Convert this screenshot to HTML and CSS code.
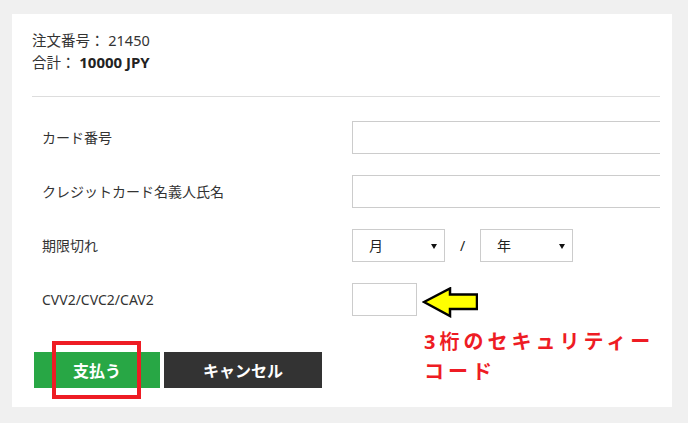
FILE: index.html
```html
<!DOCTYPE html>
<html lang="ja">
<head>
    <meta charset="UTF-8">
    <meta name="viewport" content="width=device-width, initial-scale=1.0">
    <title>カード決済</title>
    <link rel="stylesheet" href="styles.css">
</head>
<body>
    <div class="panel">
        <div class="summary">
            <div>注文番号： 21450</div>
            <div>合計： <strong>10000 JPY</strong></div>
        </div>
        <div class="divider"></div>

        <form class="card-form">
            <div class="row">
                <label for="cardNumber">カード番号</label>
                <div class="field clip">
                    <input type="text" id="cardNumber" class="text-input">
                </div>
            </div>
            <div class="row">
                <label for="cardName">クレジットカード名義人氏名</label>
                <div class="field clip">
                    <input type="text" id="cardName" class="text-input">
                </div>
            </div>
            <div class="row">
                <label for="expMonth">期限切れ</label>
                <div class="field">
                    <div class="select-wrap">
                        <select id="expMonth"><option>月</option></select>
                    </div>
                    <span class="slash">/</span>
                    <div class="select-wrap">
                        <select id="expYear"><option>年</option></select>
                    </div>
                </div>
            </div>
            <div class="row">
                <label for="cvv">CVV2/CVC2/CAV2</label>
                <div class="field cvv-field">
                    <input type="text" id="cvv" class="cvv-input">
                    <svg class="hint-arrow" width="56" height="31" viewBox="0 0 56 31">
                        <polygon points="2,15 28,1.5 28,7.5 55,7.5 55,22 28,22 28,29" fill="#ffff00" stroke="#000" stroke-width="2.5" stroke-linejoin="miter"/>
                    </svg>
                    <div class="hint-text">3桁のセキュリティー<br>コード</div>
                </div>
            </div>

            <div class="actions">
                <button type="button" class="btn btn-pay">支払う</button>
                <button type="button" class="btn btn-cancel">キャンセル</button>
                <span class="highlight"></span>
            </div>
        </form>
    </div>
</body>
</html>
```

FILE: styles.css
```css
body {
    margin: 0;
    background-color: #f0f0f0;
    font-family: "Noto Sans", "Noto Sans CJK JP", sans-serif;
    color: #333;
    font-size: 14px;
}
.panel {
    margin: 14px 0 0 12px;
    width: 660px;
    height: 393px;
    box-sizing: border-box;
    padding: 15px 12px 0 20px;
    background-color: #fff;
}
.summary {
    font-size: 14.5px;
    line-height: 22px;
}
.summary strong {
    font-size: 15px;
    font-weight: 700;
    color: #222;
}
.divider {
    margin-top: 23px;
    border-top: 1px solid #ddd;
}
.card-form {
    padding: 24px 0 0 10px;
    display: flex;
    flex-direction: column;
    gap: 21px;
}
.row {
    display: flex;
    align-items: center;
    height: 33px;
}
.row label {
    width: 310px;
    flex-shrink: 0;
    line-height: 20px;
}
.field {
    flex: 1;
    min-width: 0;
    height: 33px;
    display: flex;
    align-items: center;
}
.clip {
    overflow: hidden;
}
.text-input {
    width: 330px;
    height: 33px;
    box-sizing: border-box;
    border: 1px solid #ccc;
    flex-shrink: 0;
    outline: none;
}
.select-wrap {
    position: relative;
    width: 93px;
    height: 33px;
}
.select-wrap::after {
    content: "";
    position: absolute;
    right: 8px;
    top: 15px;
    border-left: 3px solid transparent;
    border-right: 3px solid transparent;
    border-top: 5px solid #111;
    pointer-events: none;
}
.select-wrap select {
    appearance: none;
    -webkit-appearance: none;
    width: 100%;
    height: 100%;
    border: 1px solid #ccc;
    border-radius: 0;
    background: #fff;
    padding: 0 0 0 16px;
    font-family: inherit;
    font-size: 14px;
    color: #222;
    outline: none;
}
.slash {
    width: 35px;
    text-align: center;
    color: #222;
}
.cvv-field {
    position: relative;
    overflow: visible;
}
.cvv-input {
    width: 65px;
    height: 33px;
    box-sizing: border-box;
    border: 1px solid #ccc;
    outline: none;
}
.hint-arrow {
    margin: 5px 0 0 5px;
}
.hint-text {
    position: absolute;
    left: 72px;
    top: 44px;
    color: #ee1c24;
    font-size: 20px;
    font-weight: 700;
    line-height: 30px;
    letter-spacing: 4px;
    white-space: nowrap;
}
.actions {
    position: relative;
    display: flex;
    gap: 4px;
    margin: 15px 0 0 -8px;
}
.btn {
    height: 36px;
    border: none;
    border-radius: 0;
    color: #fff;
    font-family: inherit;
    font-size: 16px;
    font-weight: 700;
    cursor: pointer;
}
.btn-pay {
    width: 126px;
    background-color: #28a745;
}
.btn-cancel {
    width: 158px;
    background-color: #333;
}
.highlight {
    position: absolute;
    left: 18px;
    top: -11px;
    width: 89px;
    height: 58px;
    box-sizing: border-box;
    border: 4px solid #ee1c24;
}
```
